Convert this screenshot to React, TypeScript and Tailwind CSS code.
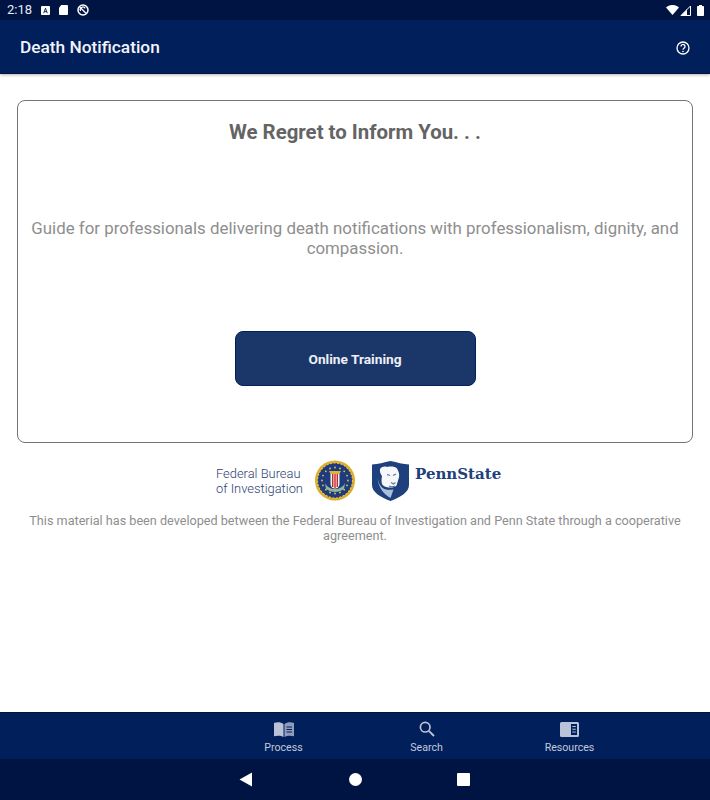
const roboto = "font-['Roboto',sans-serif]";

function StatusBar() {
  return (
    <div className="flex h-5 items-center justify-between bg-[#001443] pl-[7px] pr-[6px] text-white">
      <div className="flex items-center">
        <span className="w-[34px] text-[13px] leading-5 text-[#e8ebf2]">2:18</span>
        <svg width="9" height="9" viewBox="0 0 10 10">
          <rect width="10" height="10" rx="1" fill="#fff" />
          <path d="M3 8 5 2.500 7 8M3.800 6.200h2.400" fill="none" stroke="#001443" strokeWidth="1" />
        </svg>
        <svg width="9" height="10" viewBox="0 0 10 11" className="ml-[9px]">
          <path d="M2.500 0H9a1 1 0 0 1 1 1v9a1 1 0 0 1-1 1H1a1 1 0 0 1-1-1V3z" fill="#fff" />
        </svg>
        <svg width="12" height="12" viewBox="0 0 12 12" className="ml-[9px]">
          <circle cx="6" cy="6" r="5" fill="none" stroke="#fff" strokeWidth="1.500" />
          <path d="M3 3.200 9 9.200" stroke="#fff" strokeWidth="1.300" />
          <path d="M3.600 7a2.600 2.600 0 0 1 4.600-2.600" fill="none" stroke="#fff" strokeWidth="1.200" />
        </svg>
      </div>
      <div className="flex items-center">
        <svg width="13" height="10" viewBox="0 0 13 10">
          <path d="M0 2.600C3.600-.9 9.400-.9 13 2.600L6.500 10z" fill="#fff" />
        </svg>
        <svg width="11" height="11" viewBox="0 0 11 11" className="ml-[1px]">
          <path d="M10.500 1v9.500H1z" fill="none" stroke="#fff" strokeWidth="1" />
          <path d="M7 4.500V11H0.500z" fill="#fff" />
        </svg>
        <svg width="7" height="11" viewBox="0 0 7 11" className="ml-[6px]">
          <path d="M2 0h3v1h1.200a.8.800 0 0 1 .8.800v8.400a.8.800 0 0 1-.8.800H.8a.8.800 0 0 1-.8-.8V1.800a.8.800 0 0 1 .8-.8H2z" fill="#fff" />
        </svg>
      </div>
    </div>
  );
}

function AppBar() {
  return (
    <header className="flex h-[54px] items-center justify-between border-b border-[#001443] bg-[#001f5b] pl-5 pr-[20px] pt-[2px] shadow-[0_1px_3px_rgba(0,0,0,0.3)]">
      <h1 className="text-[17.3px] font-medium text-[#f2f4f8]">Death Notification</h1>
      <svg width="14" height="14" viewBox="0 0 14 14">
        <circle cx="7" cy="7" r="6" fill="none" stroke="#fff" strokeWidth="1.300" />
        <path d="M5 5.500a2 2 0 1 1 3.200 1.500C7.400 7.600 7 8 7 8.800" fill="none" stroke="#fff" strokeWidth="1.300" />
        <circle cx="7" cy="10.500" r=".8" fill="#fff" />
      </svg>
    </header>
  );
}

function FbiSeal() {
  const stars = Array.from({ length: 16 }, (_, i) => (i * Math.PI) / 8);
  return (
    <svg width="40" height="41" viewBox="0 0 40 41">
      <circle cx="20" cy="20.500" r="20" fill="#dcae2c" />
      <circle cx="20" cy="20.500" r="17.500" fill="#1f3a7d" />
      <circle cx="20" cy="20.500" r="17.500" fill="none" stroke="#e5c14e" strokeWidth="1.200" strokeDasharray="2 1.500" />
      {stars.map((a) => (
        <circle key={a} cx={20 + 13 * Math.cos(a)} cy={20.5 + 13 * Math.sin(a)} r="0.900" fill="#e3c34f" />
      ))}
      <path d="M14 11h12l-1.500 3h-9z" fill="#d9b53a" />
      <path d="M15.500 14h9v10a4.500 4.500 0 0 1-9 0z" fill="#f4f1e6" />
      <path d="M17 14h1.400v13H17zM19.300 14h1.400v14h-1.400zM21.600 14h1.400v13h-1.400z" fill="#c5282f" />
      <path d="M10 23c2 4 6 6 10 6s8-2 10-6l-1 6c-3 2-6 3-9 3s-6-1-9-3z" fill="#8fb59a" />
    </svg>
  );
}

function PennStateShield() {
  return (
    <svg width="37" height="40" viewBox="0 0 37 40">
      <path d="M0 3.500C6 3 12 1.500 18.500 0 25 1.500 31 3 37 3.500V24c0 7-8 12-18.500 16C8 36 0 31 0 24z" fill="#1e407c" />
      <path d="M8 8c2-2.500 5-3 7-2 4-1 8-.5 10 1.500l1 2c1.500 3 1.500 6 .5 8.500l-2 6.500c-1.500 1.500-3.500 2-6 2-3 0-6-.5-8-2.500C9 21 9.500 18 10 15c-1.500-2-2.500-4.500-2-7z" fill="#f5f7fb" />
      <path d="M5.500 17c1 5 3 9 7 11 3 1 6 1 9 .5L18.500 37C12 33.500 6.500 27 5.500 17z" fill="#a9bfdc" />
      <path d="M15 13.500l3 1M24 13l-3 1.500M19 21.500l2.500 1.500 2-1.500M17 25c2 1 4 1 6 0" fill="none" stroke="#5a7199" strokeWidth="1.100" />
    </svg>
  );
}

function NavItem({ label, children }: { label: string; children: React.ReactNode }) {
  return (
    <div className="flex w-[143px] flex-col items-center">
      <div className="flex h-[22px] items-end">{children}</div>
      <span className="mt-1 text-[10.6px] leading-[13px] text-[#c3cadb]">{label}</span>
    </div>
  );
}

function BottomNav() {
  return (
    <nav className="flex h-[47px] items-start border-t border-[#001443] bg-[#001f5b] pl-[212px] pt-[2px]">
      <NavItem label="Process">
        <svg width="20" height="15" viewBox="0 0 20 15">
          <path d="M0 1c3-1 7-1 9.500 1v13C7 13.500 3 13.500 0 14.300z" fill="#b9c2d6" />
          <path d="M10.500 2C13 0 17 0 20 1v13.300c-3-.8-7-.8-9.500.7z" fill="#8f9cba" />
          <path d="M12.500 5h5.500M12.500 7.500h5.500M12.500 10h5.500" stroke="#001f5b" strokeWidth="1.100" />
        </svg>
      </NavItem>
      <NavItem label="Search">
        <svg width="16" height="16" viewBox="0 0 16 16">
          <circle cx="6.200" cy="6.200" r="4.800" fill="none" stroke="#b9c2d6" strokeWidth="1.700" />
          <path d="M9.800 9.800 15 15" stroke="#b9c2d6" strokeWidth="1.900" />
        </svg>
      </NavItem>
      <NavItem label="Resources">
        <svg width="19" height="15" viewBox="0 0 19 15">
          <path d="M1.500 0h16A1.500 1.500 0 0 1 19 1.500v12a1.500 1.500 0 0 1-1.500 1.500h-16A1.500 1.500 0 0 1 0 13.500v-12A1.500 1.500 0 0 1 1.500 0z" fill="#b9c2d6" />
          <path d="M11 2h6v11h-6z" fill="#001f5b" />
          <path d="M12.300 4.500h3.500M12.300 7.300h3.500M12.300 10h3.500" stroke="#b9c2d6" strokeWidth="1.100" />
        </svg>
      </NavItem>
    </nav>
  );
}

function SystemNav() {
  return (
    <div className="flex h-[41px] items-center bg-[#001443] pb-[1px] pl-[239px]">
      <svg width="14" height="15" viewBox="0 0 14 15">
        <path d="M13 0.500v14L0.500 7.500z" fill="#fff" />
      </svg>
      <div className="ml-[96px] h-[13px] w-[13px] rounded-full bg-white" />
      <div className="ml-[95px] h-[13px] w-[13px] rounded-[1px] bg-white" />
    </div>
  );
}

export default function App() {
  return (
    <div className={`${roboto} flex h-[800px] w-[710px] flex-col overflow-hidden bg-white`}>
      <StatusBar />
      <AppBar />
      <main className="flex-1 px-[17px] pt-[26px]">
        <section className="flex h-[343px] flex-col items-center rounded-lg border border-[#70757d] px-2 pt-4">
          <h2 className="text-[20.4px] font-bold leading-[30px] text-[#646464]">We Regret to Inform You. . .</h2>
          <p className="mt-[71px] text-center text-[16.87px] leading-5 text-[#8e8e8e]">
            Guide for professionals delivering death notifications with professionalism, dignity, and compassion.
          </p>
          <button className="mt-[73px] h-[55px] w-[241px] rounded-lg border border-[#001f5b] bg-[#1b3769] pt-[1px] text-[13.7px] font-bold text-[#eef0f6]">
            Online Training
          </button>
        </section>
        <div className="mt-[17px] flex items-center pl-[199px]">
          <div className="w-[92px] text-[12.9px] font-light leading-[15px] text-[#2f3f73]">
            Federal Bureau
            <br />
            of Investigation
          </div>
          <div className="ml-[7px]">
            <FbiSeal />
          </div>
          <div className="ml-[17px]">
            <PennStateShield />
          </div>
          <span className="mb-[13px] ml-[6px] font-['DejaVu_Serif',serif] text-[15px] font-bold leading-[20px] text-[#1e407c]">PennState</span>
        </div>
        <p className="mt-3 text-center text-[12.65px] leading-[15px] text-[#8e8e8e]">
          This material has been developed between the Federal Bureau of Investigation and Penn State through a cooperative agreement.
        </p>
      </main>
      <BottomNav />
      <SystemNav />
    </div>
  );
}
